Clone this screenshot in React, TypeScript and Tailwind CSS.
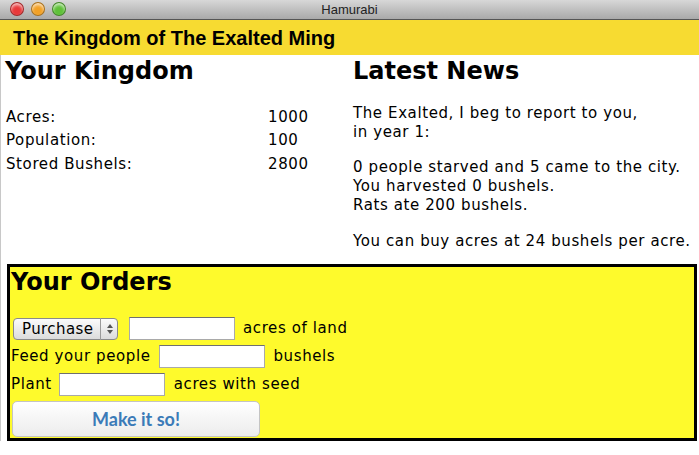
import { ChangeEvent, useState } from "react";

type Stat = { label: string; value: number };

const stats: Stat[] = [
  { label: "Acres:", value: 1000 },
  { label: "Population:", value: 100 },
  { label: "Stored Bushels:", value: 2800 },
];

function TrafficLight({ color }: { color: string }) {
  return (
    <span
      className={`w-[14px] h-[14px] rounded-full border border-black/30 ${color} shadow-[inset_0_2px_3px_rgba(255,255,255,0.7)]`}
    />
  );
}

function OrderInput({ value, onChange }: { value: string; onChange: (v: string) => void }) {
  return (
    <input
      value={value}
      onChange={(e: ChangeEvent<HTMLInputElement>) => onChange(e.target.value)}
      className="w-[106px] h-[23px] bg-white border border-[#a9a9a9] border-t-[#6f6f6f] px-1 text-[14px] outline-none"
    />
  );
}

export default function App() {
  const [mode, setMode] = useState("Purchase");
  const [acres, setAcres] = useState("");
  const [feed, setFeed] = useState("");
  const [plant, setPlant] = useState("");

  return (
    <div className="w-[699px] h-[455px] overflow-hidden bg-white font-['DejaVu_Sans',sans-serif] text-black">
      {/* window chrome */}
      <div className="relative h-[20px] bg-gradient-to-b from-[#d8d8d8] to-[#a9a9a9] border-b border-[#555] flex items-center justify-center">
        <div className="absolute left-[10px] top-[2px] flex gap-[7px]">
          <TrafficLight color="bg-[#e8393a]" />
          <TrafficLight color="bg-[#f2a126]" />
          <TrafficLight color="bg-[#5fc139]" />
        </div>
        <span className="font-['Liberation_Sans',sans-serif] text-[13px] text-[#222] leading-none">Hamurabi</span>
      </div>

      <div className="h-[35px] bg-[#f7db31] pl-[13px] flex items-center">
        <h1 className="font-['Liberation_Sans',sans-serif] font-bold text-[20px] leading-none pt-[1px]">
          The Kingdom of The Exalted Ming
        </h1>
      </div>

      <div className="border-l border-[#c8c8c8]">
        <div className="flex">
          <div className="w-[352px] pl-[4px]">
            <h2 className="font-bold text-[24px] leading-[28px] mt-[2px]">Your Kingdom</h2>
            <div className="mt-[20px] text-[15px] tracking-[0.6px]">
              {stats.map((s) => (
                <div key={s.label} className="flex h-[23.5px] items-center">
                  <span className="w-[263px] pl-[1px]">{s.label}</span>
                  <span>{s.value}</span>
                </div>
              ))}
            </div>
          </div>

          <div className="flex-1">
            <h2 className="font-bold text-[24px] leading-[28px] mt-[2px]">Latest News</h2>
            <div className="mt-[19px] text-[15px] tracking-[0.6px] leading-[19px]">
              <p>
                The Exalted, I beg to report to you,
                <br />
                in year 1:
              </p>
              <p className="mt-[16px]">
                0 people starved and 5 came to the city.
                <br />
                You harvested 0 bushels.
                <br />
                Rats ate 200 bushels.
              </p>
              <p className="mt-[17px]">You can buy acres at 24 bushels per acre.</p>
            </div>
          </div>
        </div>

        <div className="ml-[6px] mr-[2px] mt-[13px] h-[177px] border-[3px] border-black bg-[#fefa2c] pl-[1px] pt-[1px]">
          <h2 className="font-bold text-[24px] leading-[28px]">Your Orders</h2>

          <div className="mt-[21px] flex flex-col gap-[5px] text-[15px] tracking-[0.6px]">
            <div className="flex items-center h-[23px]">
              <div className="relative ml-[2px] h-[22px] w-[105px]">
                <select
                  value={mode}
                  onChange={(e) => setMode(e.target.value)}
                  className="appearance-none w-full h-full rounded-[4px] border border-[#8a8a8a] bg-gradient-to-b from-[#fbfbfb] to-[#dcdcdc] pl-[8px] text-[15px] tracking-[0.4px] leading-none outline-none"
                >
                  <option>Purchase</option>
                  <option>Sell</option>
                </select>
                <div className="pointer-events-none absolute right-0 top-0 h-full w-[18px] border-l border-[#9a9a9a] flex flex-col items-center justify-center gap-[2px]">
                  <svg width="6" height="4" viewBox="0 0 6 4">
                    <path d="M0 4 L3 0 L6 4 Z" fill="#555" />
                  </svg>
                  <svg width="6" height="4" viewBox="0 0 6 4">
                    <path d="M0 0 L3 4 L6 0 Z" fill="#555" />
                  </svg>
                </div>
              </div>
              <span className="ml-[11px]">
                <OrderInput value={acres} onChange={setAcres} />
              </span>
              <span className="ml-[8px]">acres of land</span>
            </div>

            <div className="flex items-center h-[23px]">
              <span>Feed your people</span>
              <span className="ml-[8px]">
                <OrderInput value={feed} onChange={setFeed} />
              </span>
              <span className="ml-[9px]">bushels</span>
            </div>

            <div className="flex items-center h-[23px]">
              <span>Plant</span>
              <span className="ml-[7px]">
                <OrderInput value={plant} onChange={setPlant} />
              </span>
              <span className="ml-[9px]">acres with seed</span>
            </div>

            <button
              type="button"
              className="ml-[1px] w-[248px] h-[36px] rounded-[5px] border border-[#c4c4c4] bg-gradient-to-b from-white to-[#ececec] font-['Lato',sans-serif] font-bold text-[18px] tracking-normal text-[#3b7bb8]"
            >
              Make it so!
            </button>
          </div>
        </div>
      </div>
    </div>
  );
}
